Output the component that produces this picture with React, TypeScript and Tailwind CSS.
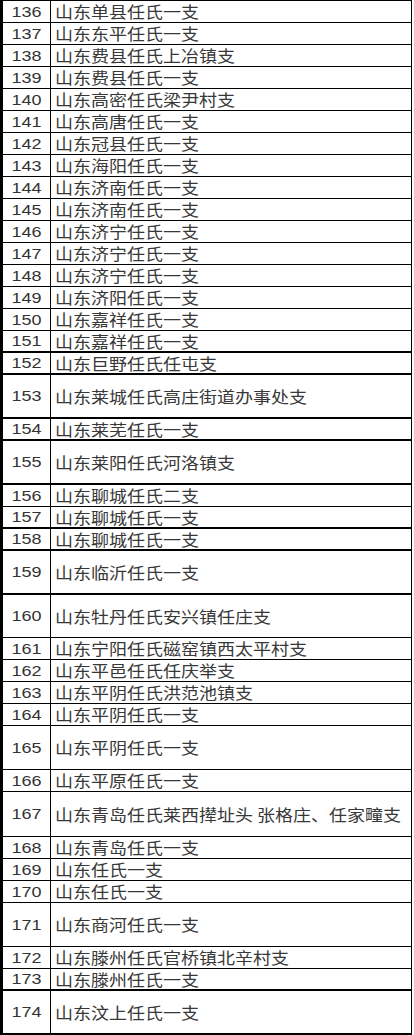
import React from "react";

type Row = { n: number; t: string; h: number; thick?: boolean };

const rows: Row[] = [
  { n: 136, t: "山东单县任氏一支", h: 22 },
  { n: 137, t: "山东东平任氏一支", h: 22 },
  { n: 138, t: "山东费县任氏上冶镇支", h: 22 },
  { n: 139, t: "山东费县任氏一支", h: 22 },
  { n: 140, t: "山东高密任氏梁尹村支", h: 22 },
  { n: 141, t: "山东高唐任氏一支", h: 22 },
  { n: 142, t: "山东冠县任氏一支", h: 22 },
  { n: 143, t: "山东海阳任氏一支", h: 22 },
  { n: 144, t: "山东济南任氏一支", h: 22 },
  { n: 145, t: "山东济南任氏一支", h: 22 },
  { n: 146, t: "山东济宁任氏一支", h: 22 },
  { n: 147, t: "山东济宁任氏一支", h: 22 },
  { n: 148, t: "山东济宁任氏一支", h: 22 },
  { n: 149, t: "山东济阳任氏一支", h: 22 },
  { n: 150, t: "山东嘉祥任氏一支", h: 22 },
  { n: 151, t: "山东嘉祥任氏一支", h: 22, thick: true },
  { n: 152, t: "山东巨野任氏任屯支", h: 22, thick: true },
  { n: 153, t: "山东莱城任氏高庄街道办事处支", h: 44, thick: true },
  { n: 154, t: "山东莱芜任氏一支", h: 22, thick: true },
  { n: 155, t: "山东莱阳任氏河洛镇支", h: 44, thick: true },
  { n: 156, t: "山东聊城任氏二支", h: 22 },
  { n: 157, t: "山东聊城任氏一支", h: 22, thick: true },
  { n: 158, t: "山东聊城任氏一支", h: 22, thick: true },
  { n: 159, t: "山东临沂任氏一支", h: 44, thick: true },
  { n: 160, t: "山东牡丹任氏安兴镇任庄支", h: 43 },
  { n: 161, t: "山东宁阳任氏磁窑镇西太平村支", h: 22 },
  { n: 162, t: "山东平邑任氏任庆举支", h: 22 },
  { n: 163, t: "山东平阴任氏洪范池镇支", h: 22 },
  { n: 164, t: "山东平阴任氏一支", h: 22 },
  { n: 165, t: "山东平阴任氏一支", h: 44 },
  { n: 166, t: "山东平原任氏一支", h: 22 },
  { n: 167, t: "山东青岛任氏莱西撵址头\u00a0张格庄、任家疃支", h: 45 },
  { n: 168, t: "山东青岛任氏一支", h: 22 },
  { n: 169, t: "山东任氏一支", h: 22 },
  { n: 170, t: "山东任氏一支", h: 22 },
  { n: 171, t: "山东商河任氏一支", h: 44 },
  { n: 172, t: "山东滕州任氏官桥镇北辛村支", h: 22 },
  { n: 173, t: "山东滕州任氏一支", h: 22, thick: true },
  { n: 174, t: "山东汶上任氏一支", h: 44, thick: true },
];

export default function App() {
  return (
    <div className="w-[414px] h-[1035px] bg-white overflow-hidden">
      <div className="w-[412px] border-l-[3px] border-t border-r border-black flex flex-col">
        {rows.map((r) => (
          <div
            key={r.n}
            className={
              "flex border-black " + (r.thick ? "border-b-2" : "border-b")
            }
            style={{ height: r.h }}
          >
            <div className="w-[48px] shrink-0 border-r border-black flex items-center justify-center">
              <span
                className="inline-block scale-x-[1.2] text-[15px] leading-[16px] text-[#333]"
                style={{ fontFamily: '"Liberation Sans", Arial, sans-serif' }}
              >
                {r.n}
              </span>
            </div>
            <div className="flex-1 flex items-center pl-[4px] whitespace-nowrap">
              <span
                className="inline-block origin-left scale-x-[1.125] text-[16px] leading-[17px] text-[#383838]"
                style={{ fontFamily: '"Noto Sans CJK SC", "Noto Sans", sans-serif' }}
              >
                {r.t}
              </span>
            </div>
          </div>
        ))}
      </div>
    </div>
  );
}
